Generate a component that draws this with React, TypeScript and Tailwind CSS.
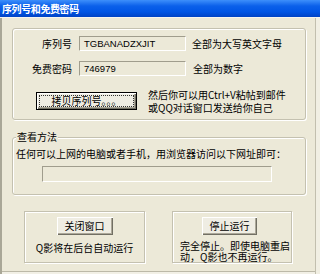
export default function App() {
  const etched =
    "border border-[#c4c1b0] shadow-[inset_1px_1px_0_#fff,1px_1px_0_#fff]";
  const sunken =
    "border border-t-[#a09d8d] border-l-[#a09d8d] border-b-white border-r-white";
  const btn =
    "bg-[#efede3] shadow-[inset_1px_1px_0_#fff,inset_-1px_-1px_0_#716f64,inset_-2px_-2px_0_#aca899] flex items-center justify-center";
  return (
    <div className="w-[320px] h-[274px] bg-[#ECE9D8] overflow-hidden flex flex-col font-['Noto_Sans_CJK_SC','Noto_Sans',sans-serif] text-[10px] leading-[12px] text-black">
      <div className="h-[17px] shrink-0 bg-[linear-gradient(180deg,#3d8ffb_0%,#0b60ea_35%,#0055e5_70%,#0043c4_100%)] text-white font-bold pl-[2px] flex items-center tracking-[-0.4px]">
        序列号和免费密码
      </div>
      <div className="h-px shrink-0 bg-[#f6f5ef]" />
      <div className="flex flex-1 min-h-0">
        <div className="w-[2px] bg-[#a9a797]" />
        <div className="w-[313px] flex flex-col">
          {/* first box */}
          <div className={`mt-[10px] ml-[10px] w-[294px] h-[92px] rounded-[3px] ${etched} flex flex-col pt-[7px]`}>
            <div className="flex items-center h-[15px]">
              <div className="w-[59px] text-right">序列号</div>
              <div className={`ml-[7px] w-[107px] h-[15px] pl-[4px] flex items-center font-['Liberation_Sans',sans-serif] text-[9.5px] ${sunken}`}>
                TGBANADZXJIT
              </div>
              <div className="ml-[6px]">全部为大写英文字母</div>
            </div>
            <div className="flex items-center h-[15px] mt-[10px]">
              <div className="w-[59px] text-right">免费密码</div>
              <div className={`ml-[7px] w-[107px] h-[15px] pl-[4px] flex items-center font-['Liberation_Sans',sans-serif] text-[9.5px] ${sunken}`}>
                746979
              </div>
              <div className="ml-[7px]">全部为数字</div>
            </div>
            <div className="flex items-center mt-[12px]">
              <div className="ml-[23px] w-[101px] h-[18px] border border-black bg-[#efede3] shadow-[inset_1px_1px_0_#fff,inset_-1px_-1px_0_#716f64,inset_-2px_-2px_0_#aca899] relative flex items-center justify-center">
                <span className="absolute inset-[2px] border border-dotted border-[#333]" />
                拷贝序列号。。。
              </div>
              <div className="ml-[11px] leading-[13px]">
                <div>然后你可以用Ctrl+V粘帖到邮件</div>
                <div>或QQ对话窗口发送给你自己</div>
              </div>
            </div>
          </div>

          {/* second box */}
          <fieldset className={`mt-[11px] ml-[10px] w-[294px] rounded-[3px] px-[3px] pb-[12px] ${etched}`}>
            <legend className="px-[1px] leading-[12px] bg-[#ECE9D8]">查看方法</legend>
            <div className="mt-[5px] whitespace-nowrap">
              任何可以上网的电脑或者手机，用浏览器访问以下网址即可：
            </div>
            <div className={`mt-[6px] ml-[26px] w-[230px] h-[16px] ${sunken}`} />
          </fieldset>

          {/* bottom boxes */}
          <div className="flex mt-[16px] ml-[22px] gap-[27px]">
            <div className={`w-[121px] h-[52px] ${etched} flex flex-col items-center`}>
              <div className={`mt-[5px] w-[56px] h-[18px] ${btn}`}>关闭窗口</div>
              <div className="mt-[7px] leading-[12px]">Q影将在后台自动运行</div>
            </div>
            <div className={`w-[120px] h-[52px] ${etched} flex flex-col`}>
              <div className={`mt-[5px] ml-[29px] w-[55px] h-[18px] ${btn}`}>停止运行</div>
              <div className="mt-[5px] pl-[7px] leading-[11px] whitespace-nowrap">
                <div>完全停止。即使电脑重启</div>
                <div>动，Q影也不再运行。</div>
              </div>
            </div>
          </div>
          <div className="flex-1" />
          <div className="h-px bg-[#bcb9a8]" />
          <div className="h-[2px] bg-[#f2f0e6]" />
        </div>
        <div className="w-px bg-[#c2bfae]" />
        <div className="flex-1 bg-[#f1efe3]" />
      </div>
    </div>
  );
}
